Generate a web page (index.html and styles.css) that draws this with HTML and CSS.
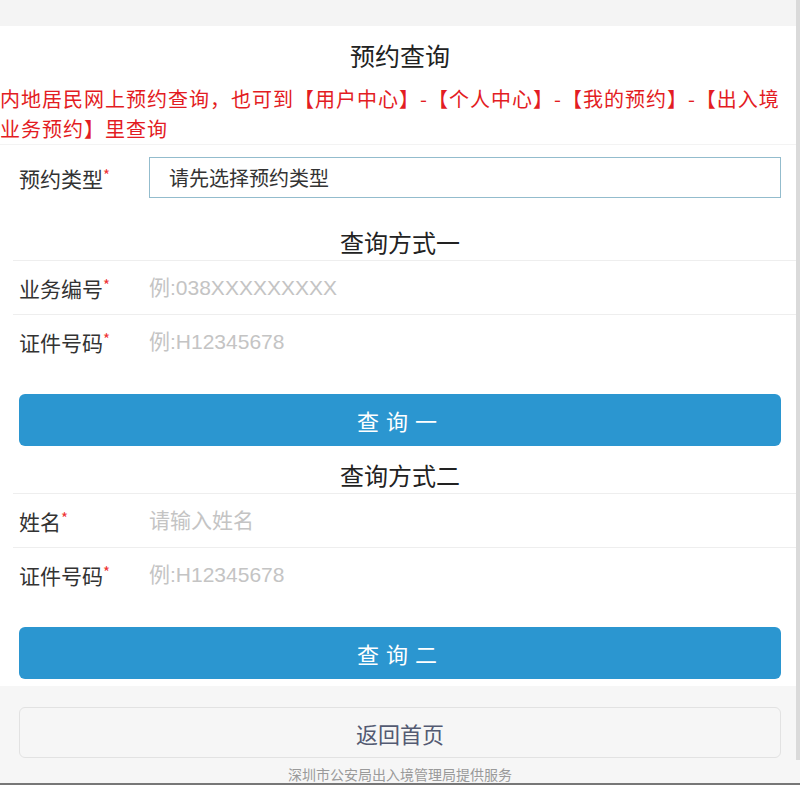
FILE: index.html
```html
<!DOCTYPE html>
<html lang="zh-CN">
<head>
    <meta charset="UTF-8">
    <meta name="viewport" content="width=device-width, initial-scale=1.0">
    <title>预约查询</title>
    <link rel="stylesheet" href="styles.css">
</head>
<body>
    <div class="topbar"></div>

    <div class="main">
        <h1 class="page-title">预约查询</h1>
        <p class="notice">内地居民网上预约查询，也可到【用户中心】-【个人中心】-【我的预约】-【出入境业务预约】里查询</p>

        <div class="type-row">
            <label class="label">预约类型<span class="req">*</span></label>
            <div class="select-box">请先选择预约类型</div>
        </div>

        <h2 class="section-title first">查询方式一</h2>
        <div class="form-row">
            <label class="label">业务编号<span class="req">*</span></label>
            <input type="text" placeholder="例:038XXXXXXXXX">
        </div>
        <div class="form-row">
            <label class="label">证件号码<span class="req">*</span></label>
            <input type="text" placeholder="例:H12345678">
        </div>
        <button class="btn btn-primary">查询一</button>

        <h2 class="section-title">查询方式二</h2>
        <div class="form-row">
            <label class="label">姓名<span class="req">*</span></label>
            <input type="text" placeholder="请输入姓名">
        </div>
        <div class="form-row">
            <label class="label">证件号码<span class="req">*</span></label>
            <input type="text" placeholder="例:H12345678">
        </div>
        <button class="btn btn-primary">查询二</button>
    </div>

    <div class="footer">
        <button class="btn btn-back">返回首页</button>
        <div class="copyright">深圳市公安局出入境管理局提供服务</div>
    </div>

    <div class="scrollbar"></div>
</body>
</html>
```

FILE: styles.css
```css
body {
    margin: 0;
    padding: 0;
    background: #f6f6f6;
    font-family: "Noto Sans CJK SC", "Liberation Sans", sans-serif;
    color: #333;
    position: relative;
    height: 783px;
    overflow: hidden;
    border-bottom: 2px solid #777;
}

.topbar {
    height: 26px;
    background: #f4f4f4;
}

.main {
    background: #fff;
    padding-bottom: 7px;
}

.page-title {
    margin: 0;
    height: 58px;
    line-height: 58px;
    text-align: center;
    font-size: 25px;
    font-weight: normal;
    color: #222;
}

.notice {
    margin: 0;
    padding-right: 4px;
    font-size: 20px;
    line-height: 30px;
    letter-spacing: 1px;
    color: #e31c23;
    border-bottom: 1px solid #f3f3f3;
}

.type-row {
    display: flex;
    align-items: center;
    padding: 12px 19px 0;
}

.label {
    width: 130px;
    flex-shrink: 0;
    font-size: 21px;
    color: #333;
}

.req {
    color: #e33;
    font-size: 15px;
    vertical-align: top;
    position: relative;
    top: 1px;
}

.select-box {
    flex: 1;
    height: 39px;
    line-height: 39px;
    padding-left: 19px;
    border: 1px solid #93bccd;
    font-size: 20px;
    color: #333;
}

.section-title {
    margin: 11px 0 0;
    line-height: 36px;
    text-align: center;
    font-size: 24px;
    font-weight: normal;
    color: #222;
}

.section-title.first {
    margin-top: 26px;
}

.form-row {
    display: flex;
    align-items: center;
    height: 53px;
    margin-left: 13px;
    padding-left: 6px;
    border-top: 1px solid #eee;
}

.form-row input {
    flex: 1;
    border: none;
    outline: none;
    padding: 0;
    font-family: "Liberation Sans", "Noto Sans CJK SC", sans-serif;
    font-size: 21px;
    color: #333;
    background: transparent;
}

.form-row input::placeholder {
    color: #c4c4c4;
}

.btn {
    display: block;
    width: 762px;
    margin: 0 19px;
    border-radius: 6px;
    font-family: "Noto Sans CJK SC", sans-serif;
    font-size: 22px;
    cursor: pointer;
}

.btn-primary {
    height: 52px;
    margin-top: 26px;
    border: none;
    background: #2b96d0;
    color: #fff;
    letter-spacing: 7px;
    padding-left: 7px;
}

.footer {
    padding-top: 21px;
    text-align: center;
}

.btn-back {
    height: 51px;
    background: #f6f6f6;
    border: 1px solid #e2e2e2;
    color: #535a72;
}

.copyright {
    margin-top: 6px;
    line-height: 20px;
    font-size: 14px;
    color: #9a9a9a;
}

.scrollbar {
    position: absolute;
    top: 0;
    right: 0;
    width: 4px;
    height: 760px;
    background: #dadada;
}
```
